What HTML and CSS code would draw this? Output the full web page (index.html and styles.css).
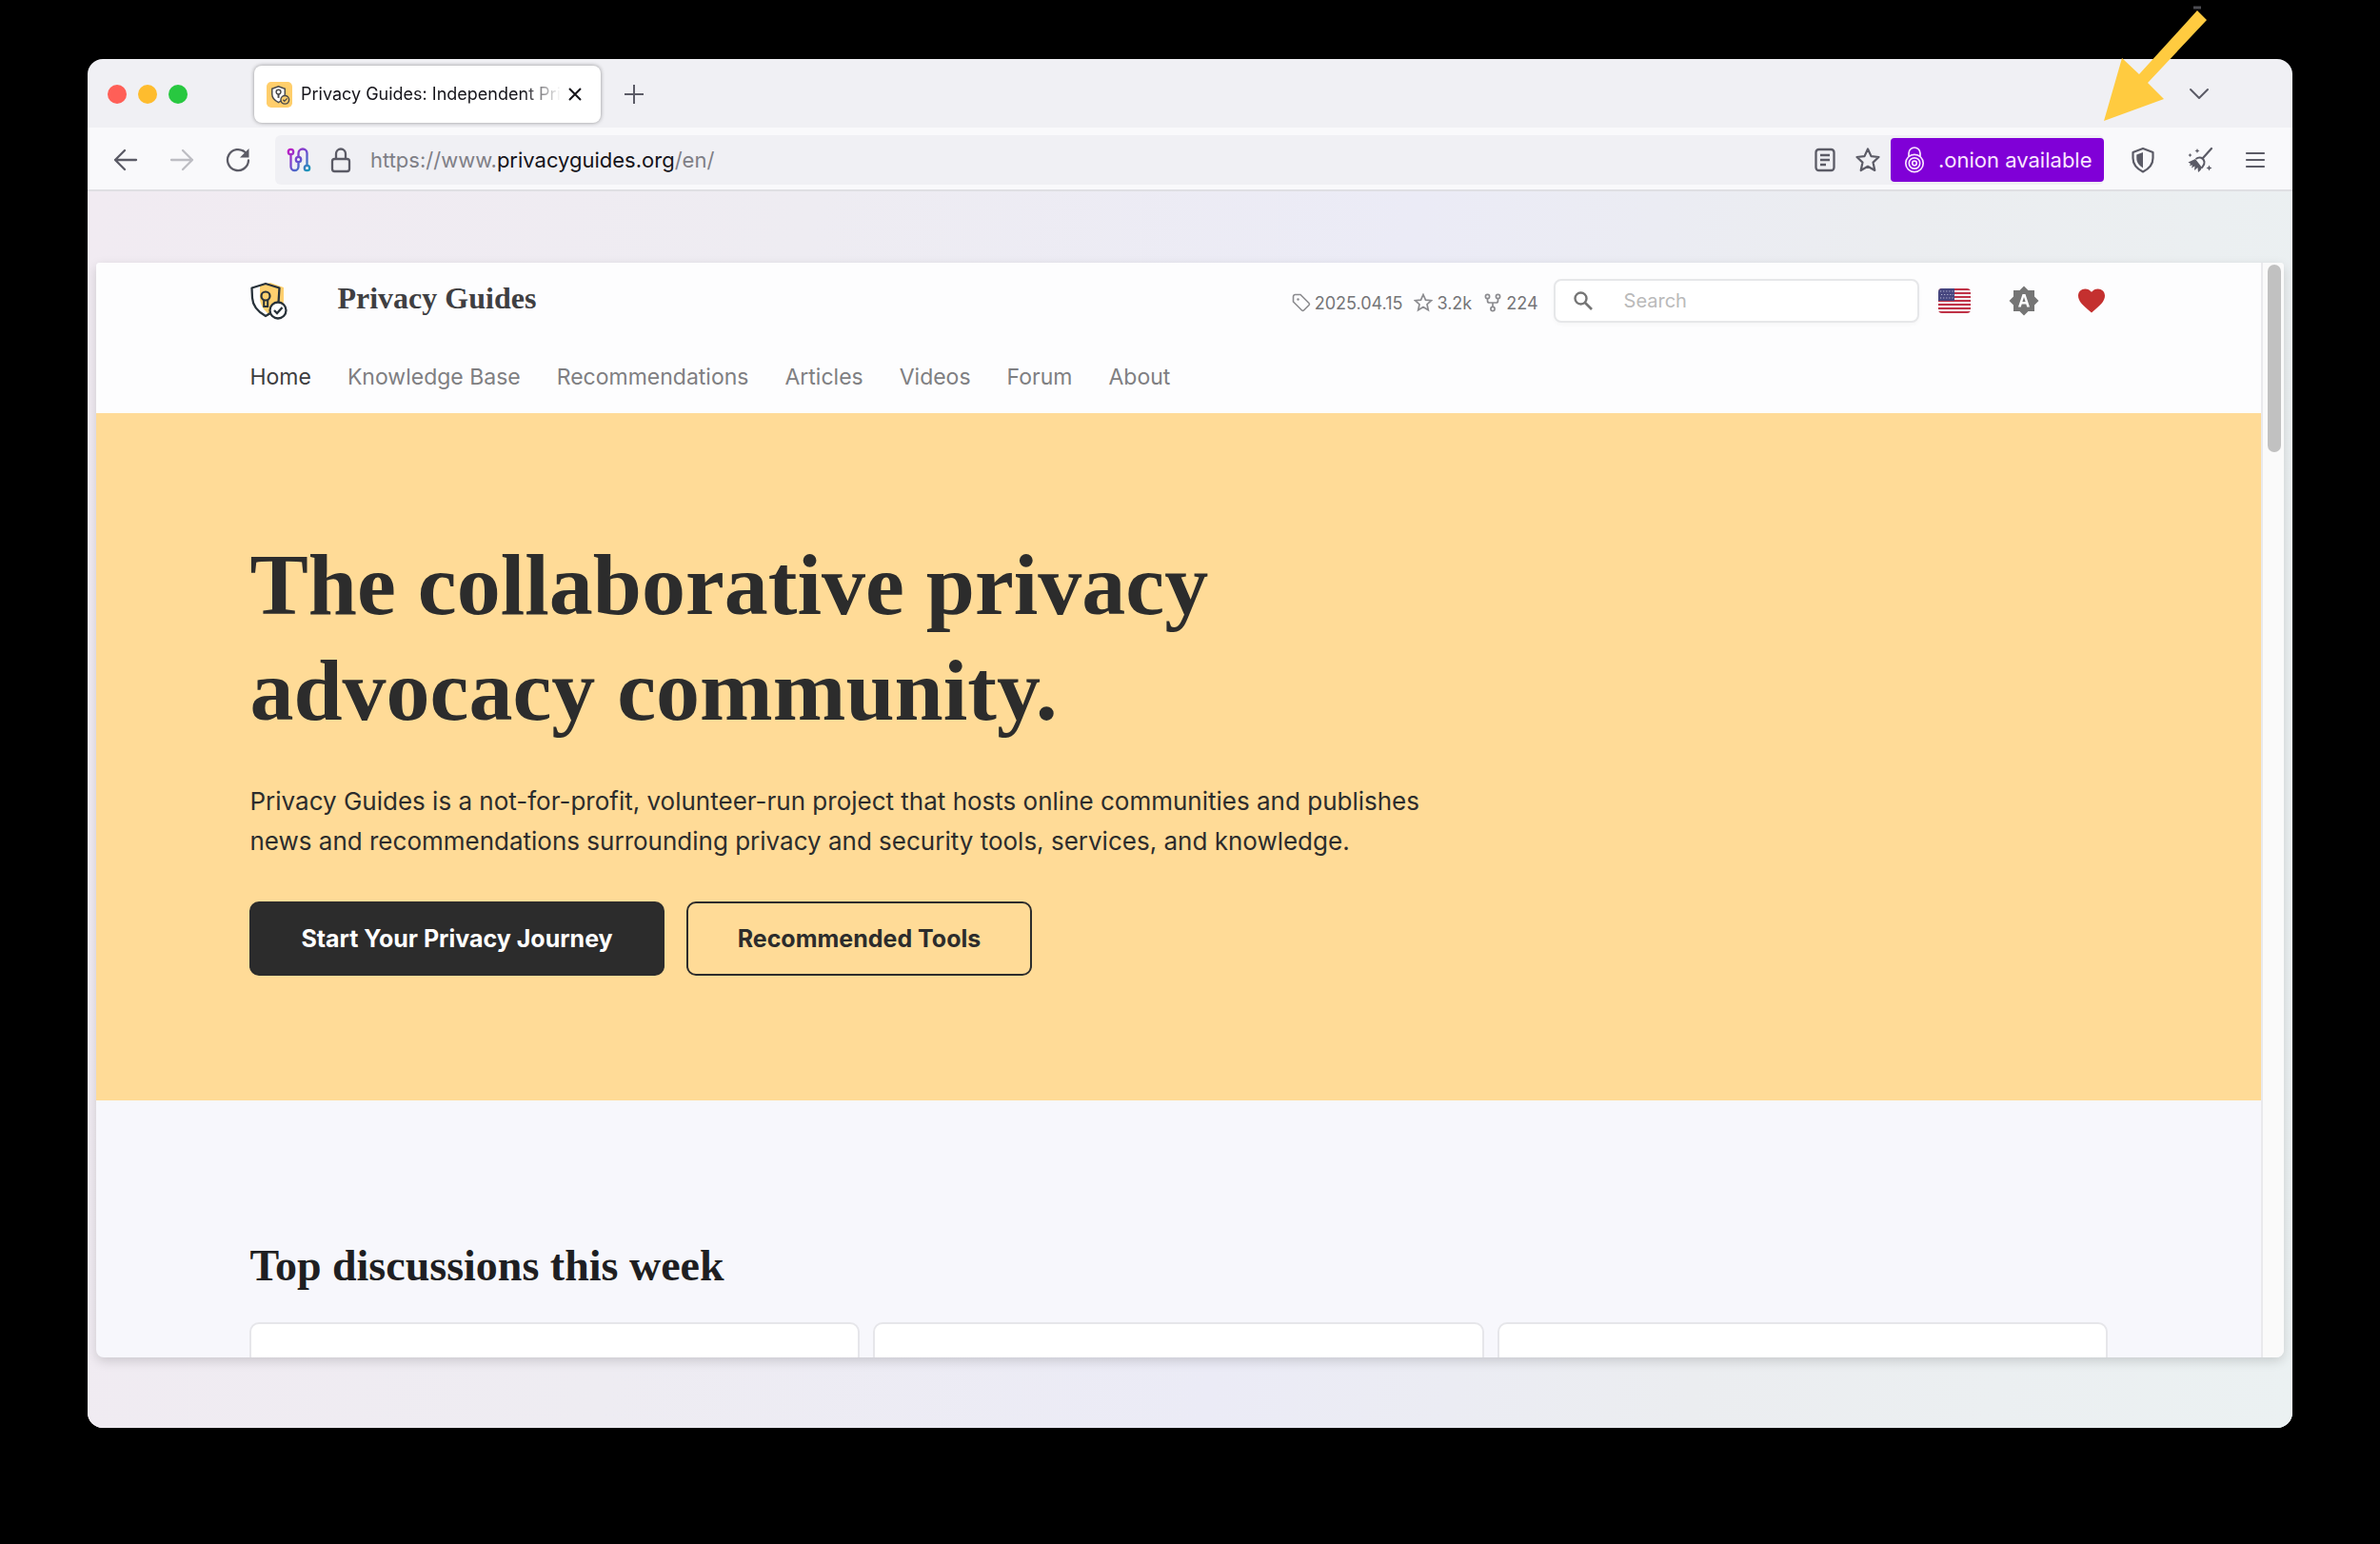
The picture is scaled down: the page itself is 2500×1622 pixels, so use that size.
FILE: index.html
```html
<!DOCTYPE html>
<html lang="en">
<head>
<meta charset="utf-8">
<title>Privacy Guides</title>
<link rel="stylesheet" href="styles.css">
</head>
<body>
<div class="window">
  <div class="tabstrip">
    <div class="lights"><span class="light red"></span><span class="light amber"></span><span class="light green"></span></div>
    <div class="tab">
      <svg class="favicon" viewBox="0 0 28 28"><rect width="28" height="28" rx="5" fill="#ffce6b"/><path d="M6 7.500l7-2.500 7 2.500v6c0 4-3 7-7 9-4-2-7-5-7-9z" fill="#fff" stroke="#4a4a4a" stroke-width="1.500"/><circle cx="13" cy="11" r="2.500" fill="none" stroke="#4a4a4a" stroke-width="1.500"/><path d="M13 13.500v4" stroke="#4a4a4a" stroke-width="2"/><circle cx="20" cy="19.500" r="4.500" fill="#ffce6b" stroke="#4a4a4a" stroke-width="1.500"/><path d="M18 19.500l1.500 1.500 3-3" fill="none" stroke="#4a4a4a" stroke-width="1.300"/></svg>
      <span class="tab-title">Privacy Guides: Independent Pri</span>
      <button class="icon-btn" aria-label="Close tab"><svg width="16" height="16" viewBox="0 0 16 16"><path d="M2 2l12 12M14 2L2 14" stroke="#15141a" stroke-width="2" fill="none"/></svg></button>
    </div>
    <button class="icon-btn new-tab" aria-label="New tab"><svg width="22" height="22" viewBox="0 0 22 22"><path d="M11 1v20M1 11h20" stroke="#5b5b66" stroke-width="2"/></svg></button>
    <button class="icon-btn list-tabs" aria-label="List all tabs"><svg width="24" height="14" viewBox="0 0 24 14"><path d="M3 2l9 9 9-9" fill="none" stroke="#5b5b66" stroke-width="2" stroke-linecap="round" stroke-linejoin="round"/></svg></button>
  </div>

  <div class="toolbar">
    <div class="nav-buttons">
      <button class="icon-btn" aria-label="Back"><svg width="26" height="26" viewBox="0 0 26 26"><path d="M24 13H2M12 3L2 13l10 10" fill="none" stroke="#5b5b66" stroke-width="2.300" stroke-linecap="round" stroke-linejoin="round"/></svg></button>
      <button class="icon-btn" aria-label="Forward"><svg width="26" height="26" viewBox="0 0 26 26"><path d="M2 13h22M14 3l10 10-10 10" fill="none" stroke="#bdbdc3" stroke-width="2.300" stroke-linecap="round" stroke-linejoin="round"/></svg></button>
      <button class="icon-btn" aria-label="Reload"><svg width="26" height="26" viewBox="0 0 26 26"><path d="M24 13.500A11 11 0 1 1 20.500 5" fill="none" stroke="#5b5b66" stroke-width="2.300" stroke-linecap="round"/><path d="M24.500 1v9.500H15z" fill="#5b5b66"/></svg></button>
    </div>
    <div class="urlbar">
      <button class="icon-btn" aria-label="Tor circuit"><svg width="26" height="26" viewBox="0 0 26 26"><defs><linearGradient id="circuit" gradientUnits="userSpaceOnUse" x1="2" y1="2" x2="24" y2="24"><stop offset="0" stop-color="#c11bc4"/><stop offset=".5" stop-color="#6a4fd0"/><stop offset="1" stop-color="#1a9bb8"/></linearGradient></defs><g fill="none" stroke="url(#circuit)" stroke-width="2.300"><circle cx="4.500" cy="4.500" r="2.700"/><circle cx="12.500" cy="12.500" r="2.700"/><circle cx="21.500" cy="21.500" r="2.700"/><path d="M4.500 7.200V20a4 4 0 0 0 8 0v-4.800M12.500 9.800V6a4.500 4.500 0 0 1 9 0v12.800"/></g></svg></button>
      <button class="icon-btn" aria-label="Site security"><svg width="22" height="28" viewBox="0 0 22 28"><g fill="none" stroke="#5b5b66" stroke-width="2.300"><rect x="2" y="13" width="18" height="13" rx="2.500"/><path d="M6 13V7.500a5 5 0 0 1 10 0V13"/></g></svg></button>
      <div class="url" role="textbox" aria-label="Address">https://www.<span class="domain">privacyguides.org</span>/en/</div>
      <div class="url-actions">
        <button class="icon-btn" aria-label="Reader view"><svg width="22" height="26" viewBox="0 0 22 26"><g fill="none" stroke="#5b5b66" stroke-width="2.300"><rect x="1.500" y="2" width="19" height="22" rx="3"/><path d="M6 8h10M6 13h10M6 18h6"/></g></svg></button>
        <button class="icon-btn" aria-label="Bookmark"><svg width="28" height="28" viewBox="0 0 28 28"><path d="M14 2.500l3.500 7.600 8 .9-6 5.600 1.800 8.400L14 20.800 6.700 25l1.800-8.400-6-5.600 8-.9z" fill="none" stroke="#5b5b66" stroke-width="2.200" stroke-linejoin="round"/></svg></button>
      </div>
      <button class="onion"><svg width="22" height="28" viewBox="0 0 22 28"><g fill="none" stroke="#fbe6ff" stroke-width="1.700"><path d="M5 10V7a6 6 0 0 1 12 0v3"/><circle cx="11" cy="17.500" r="9.200"/><circle cx="11" cy="17.500" r="5.700"/><circle cx="11" cy="17.500" r="2.300"/></g></svg>.onion available</button>
    </div>
    <div class="tools">
      <button class="icon-btn" aria-label="Security level"><svg width="26" height="28" viewBox="0 0 26 28"><path d="M13 2l10.500 4v6c0 6.500-3.500 11-10.500 14.500C6 23 2.500 18.500 2.500 12V6z" fill="none" stroke="#5b5b66" stroke-width="2.200" stroke-linejoin="round"/><path d="M13 6v16.500c-4.500-3-6.700-6-6.700-10.500V8.500z" fill="#5b5b66"/></svg></button>
      <button class="icon-btn" aria-label="New identity"><svg width="28" height="28" viewBox="0 0 28 28"><path d="M26 2L17 12" stroke="#5b5b66" stroke-width="2.200" stroke-linecap="round"/><path d="M9.500 13c4-3 8-1.500 9 3 .500 3-1 4-3 6.500" fill="none" stroke="#5b5b66" stroke-width="2"/><path d="M9 13L1.500 16.500 4 18l-1 2 3-.5-1 3 3.500-2L8 25l3.500-3 .5 5c2.500-1.500 3-3 4-5z" fill="#5b5b66"/><path d="M11 2l.8 1.700 1.700.8-1.700.8L11 7l-.8-1.700-1.700-.8 1.700-.8zM3.500 7l.7 1.300 1.300.7-1.300.7-.7 1.300-.7-1.300L1.500 9l1.300-.7zM23.500 19.500l.9 2.100 2.100.9-2.100.9-.9 2.100-.9-2.100-2.100-.9 2.100-.9z" fill="#5b5b66"/></svg></button>
      <button class="icon-btn" aria-label="Menu"><svg width="22" height="20" viewBox="0 0 22 20"><path d="M2 3h18M2 10h18M2 17h18" stroke="#5b5b66" stroke-width="2.200" stroke-linecap="round"/></svg></button>
    </div>
  </div>

  <div class="letterbox">
    <div class="viewport">
      <div class="page">
        <header class="site-header wrap">
          <div class="brand-row">
            <svg class="logo" viewBox="0 0 40 40"><path d="M11 4l11-3 14 5v13c0 8-4 13-11 18-9-5-14-12-14-20z" fill="#ffd06f"/><path d="M2.500 6.500L17 2l14.500 4.500L30.500 22C28 29 23 33 17 36 8 31 3.500 25 3 17z" fill="none" stroke="#28323a" stroke-width="2.300" stroke-linejoin="round"/><circle cx="17" cy="15" r="4.500" fill="none" stroke="#28323a" stroke-width="2.200"/><path d="M15.200 19v7h4v-7" fill="none" stroke="#28323a" stroke-width="2"/><circle cx="30" cy="30" r="8.500" fill="#fff" stroke="#28323a" stroke-width="2.300"/><path d="M26 30l3 3 5.500-6" fill="none" stroke="#28323a" stroke-width="2.300"/></svg>
            <a class="brand" href="#">Privacy Guides</a>
            <ul class="facts">
              <li><svg width="20" height="20" viewBox="0 0 20 20"><path d="M1.500 3.500a2 2 0 0 1 2-2H9l9 9a1.500 1.500 0 0 1 0 2L12.500 18a1.500 1.500 0 0 1-2 0l-9-9z" fill="none" stroke="#8b8b8f" stroke-width="1.600"/><circle cx="6.500" cy="6.500" r="1.200" fill="#8b8b8f"/></svg>2025.04.15</li>
              <li><svg width="20" height="20" viewBox="0 0 20 20"><path d="M10 1.500l2.500 5.600 6 .6-4.500 4 1.300 6L10 14.600l-5.300 3.100L6 11.700l-4.500-4 6-.6z" fill="none" stroke="#8b8b8f" stroke-width="1.700"/></svg>3.2k</li>
              <li><svg width="20" height="20" viewBox="0 0 20 20"><g fill="none" stroke="#8b8b8f" stroke-width="1.700"><circle cx="4.500" cy="3.500" r="2.100"/><circle cx="15.500" cy="3.500" r="2.100"/><circle cx="10" cy="16.500" r="2.100"/><path d="M4.500 5.600V8q0 2 2 2h7q2 0 2-2V5.600M10 10v4.400"/></g></svg>224</li>
            </ul>
            <label class="search"><svg width="22" height="22" viewBox="0 0 22 22"><circle cx="8.500" cy="8.500" r="6" fill="none" stroke="#757575" stroke-width="2.400"/><path d="M13 13l7 7" stroke="#757575" stroke-width="2.600"/></svg><input type="search" placeholder="Search" aria-label="Search"></label>
            <div class="options">
              <button class="icon-btn" aria-label="Language"><svg width="34" height="26" viewBox="0 0 34 26"><defs><clipPath id="flag"><rect width="34" height="26" rx="4"/></clipPath></defs><g clip-path="url(#flag)"><rect width="34" height="26" fill="#f4f0f2"/><path d="M0 1h34M0 5h34M0 9h34M0 13h34M0 17h34M0 21h34M0 25h34" stroke="#bf3247" stroke-width="2"/><rect width="17" height="13" fill="#46467f"/><path d="M2 3h14M3 6.500h13M2 10h14" stroke="#b9b9d4" stroke-width="1.200" stroke-dasharray="1.200 1.900"/></g></svg></button>
              <button class="icon-btn" aria-label="Theme"><svg width="32" height="32" viewBox="0 0 32 32"><path fill-rule="evenodd" d="M16 .5l4.500 4.500H27v6.500l4.500 4.500-4.500 4.500V27h-6.500L16 31.500 11.500 27H5v-6.500L.5 16 5 11.500V5h6.500zM14.500 9L10 22.500h2.800l.9-3h4.600l.9 3H22L17.500 9zM14.400 17L16 12l1.600 5z" fill="#757575"/></svg></button>
              <button class="icon-btn" aria-label="Donate"><svg width="30" height="28" viewBox="0 0 30 28"><path d="M15 26.500C6 19 1 14.500 1 8.800 1 4.500 4.200 1.500 8.300 1.500c2.600 0 5 1.200 6.700 3.300 1.700-2.100 4.100-3.300 6.700-3.300 4.100 0 7.300 3 7.300 7.300 0 5.700-5 10.200-14 17.700z" fill="#c4302f"/></svg></button>
            </div>
          </div>
          <nav class="site-nav">
            <a class="active" href="#">Home</a><a href="#">Knowledge Base</a><a href="#">Recommendations</a><a href="#">Articles</a><a href="#">Videos</a><a href="#">Forum</a><a href="#">About</a>
          </nav>
        </header>
        <section class="hero">
          <div class="wrap">
            <h1>The collaborative privacy<br>advocacy community.</h1>
            <p>Privacy Guides is a not-for-profit, volunteer-run project that hosts online communities and publishes<br>news and recommendations surrounding privacy and security tools, services, and knowledge.</p>
            <div class="cta"><a class="button primary" href="#">Start Your Privacy Journey</a><a class="button" href="#">Recommended Tools</a></div>
          </div>
        </section>
        <section class="discussions wrap">
          <h2>Top discussions this week</h2>
          <div class="cards"><div class="card"></div><div class="card"></div><div class="card"></div></div>
        </section>
      </div>
      <div class="scrollbar"><div class="thumb"></div></div>
    </div>
  </div>
  <svg class="pointer" viewBox="0 0 110 122" aria-hidden="true"><path d="M0 121L19 55 37 72 98 5l10 10-62 66 17 17z" fill="#ffcb40"/><path d="M94 2h8" stroke="#4c4c52" stroke-width="3"/></svg>
</div>
</body>
</html>
```

FILE: styles.css
```css
* { box-sizing: border-box; }

body {
  margin: 0;
  padding: 62px 92px 122px;
  min-height: 100vh;
  background: #000;
  font-family: Inter, "Liberation Sans", sans-serif;
  color: #2c2c2c;
}

a { color: inherit; text-decoration: none; }
svg { display: block; flex: none; }

.icon-btn {
  display: flex;
  padding: 0;
  border: 0;
  background: none;
}

/* Browser window */
.window {
  position: relative;
  display: flex;
  flex-direction: column;
  height: calc(100vh - 184px);
  border-radius: 16px;
  background: #f0f0f4;
}

.pointer {
  position: absolute;
  top: -56px;
  right: 88px;
  width: 110px;
  height: 122px;
}

.tabstrip {
  display: flex;
  align-items: center;
  height: 72px;
  padding: 2px 86px 0 21px;
}

.lights { display: flex; gap: 12px; margin-right: 70px; }
.light { width: 20px; height: 20px; border-radius: 50%; }
.red { background: #ff5f57; }
.amber { background: #febc2e; }
.green { background: #28c840; }

.tab {
  display: flex;
  align-items: center;
  width: 364px;
  height: 60px;
  padding: 0 20px 0 13px;
  border-radius: 8px;
  background: #fff;
  box-shadow: 0 0 4px rgba(0, 0, 0, .4);
}

.favicon { width: 27px; height: 27px; margin-right: 9px; }

.tab-title {
  flex: 1;
  margin-right: 7px;
  font-size: 18px;
  line-height: 24px;
  white-space: nowrap;
  color: #15141a;
  mask-image: linear-gradient(to left, transparent, #000 40px);
}

.new-tab { margin-left: 24px; }
.list-tabs { margin-left: auto; }

.toolbar {
  display: flex;
  align-items: center;
  height: 67px;
  padding: 2px 28px 0 27px;
  border-bottom: 2px solid #dfdfe3;
  background: #f9f9fb;
}

.nav-buttons { display: flex; gap: 33px; }

.urlbar {
  display: flex;
  flex: 1;
  align-items: center;
  height: 52px;
  margin: 0 28px 0 26px;
  padding-left: 12px;
  border-radius: 6px;
  background: #f0f0f4;
}

.urlbar > .icon-btn { margin-right: 20px; }
.url { flex: 1; font-size: 22px; color: #7f7f86; }
.domain { color: #15141a; }
.url-actions { display: flex; align-items: center; gap: 20px; margin-right: 10px; }

.onion {
  display: flex;
  align-items: center;
  gap: 14px;
  width: 224px;
  height: 46px;
  padding: 0 0 0 14px;
  border: 0;
  border-radius: 4px;
  background: #8000d7;
  font: 22px Inter, sans-serif;
  white-space: nowrap;
  color: #fbe6ff;
}

.tools { display: flex; align-items: center; gap: 33px; }

/* Letterboxed page */
.letterbox {
  flex: 1;
  min-height: 0;
  padding: 75px 9px 74px;
  border-radius: 0 0 16px 16px;
  background: linear-gradient(100deg, #f1ebf2, #eeecf2 30%, #ebebf6 55%, #ebedf0 75%, #ebf1f2);
}

.viewport {
  display: flex;
  height: 100%;
  overflow: hidden;
  border-radius: 4px 4px 8px 8px;
  background: #f7f7fc;
  box-shadow: 0 4px 12px rgba(0, 0, 0, .15);
}

.page { flex: 1; }

.scrollbar {
  width: 24px;
  padding: 2px 3px 0 5px;
  border-left: 2px solid #e9e9ec;
  background: #fafafa;
}

.thumb { width: 14px; height: 197px; border-radius: 7px; background: #c1c1c1; }

.wrap { padding-right: 7.1%; padding-left: 7.1%; }

.site-header { height: 158px; background: #fdfdfe; }

.brand-row { display: flex; align-items: center; height: 80px; }
.logo { width: 40px; height: 40px; margin-right: 52px; }

.brand {
  flex: 1;
  padding-bottom: 6px;
  font: bold 32px "Liberation Serif", serif;
  color: #3f3f42;
}

.facts {
  display: flex;
  gap: 12px;
  margin: 4px 16px 0 0;
  padding: 0;
  list-style: none;
  font-size: 18px;
  color: #757578;
}

.facts li { display: flex; align-items: center; gap: 4px; }

.search {
  display: flex;
  align-items: center;
  gap: 32px;
  width: 384px;
  height: 46px;
  padding: 0 18px;
  border: 2px solid #e6e7e9;
  border-radius: 8px;
  background: #fff;
  box-shadow: 0 2px 4px rgba(0, 0, 0, .03);
}

.search input {
  width: 100%;
  padding: 0;
  border: 0;
  outline: 0;
  background: none;
  font: 20px Inter, sans-serif;
}

.search input::placeholder { color: #bababa; }

.options { display: flex; align-items: center; gap: 40px; margin: 0 2px 0 20px; }

.site-nav {
  display: flex;
  gap: 38px;
  padding-top: 24px;
  font-size: 23px;
  line-height: 32px;
  color: #7f7f82;
}

.active { color: #3d3d40; }

.hero { height: 722px; padding-top: 125px; background: #ffdb97; }

h1 {
  margin: 0;
  font: bold 92px/111px "Liberation Serif", serif;
  color: #2c2c2c;
}

.hero p { margin: 40px 0 0; font-size: 26px; line-height: 42px; white-space: nowrap; }

.cta { display: flex; gap: 23px; margin-top: 42px; }

.button {
  padding: 0 52px;
  border: 2px solid #2c2c2c;
  border-radius: 10px;
  font-size: 25px;
  font-weight: 700;
  line-height: 74px;
}

.primary { background: #2c2c2c; color: #fff; }

h2 {
  margin: 0;
  padding-top: 148px;
  font: bold 46px/52px "Liberation Serif", serif;
  color: #1f1f22;
}

.cards { display: flex; gap: 14px; margin-top: 33px; }

.card {
  flex: 1;
  height: 240px;
  border: 2px solid #e6e6ea;
  border-radius: 10px;
  background: #fff;
}
```
